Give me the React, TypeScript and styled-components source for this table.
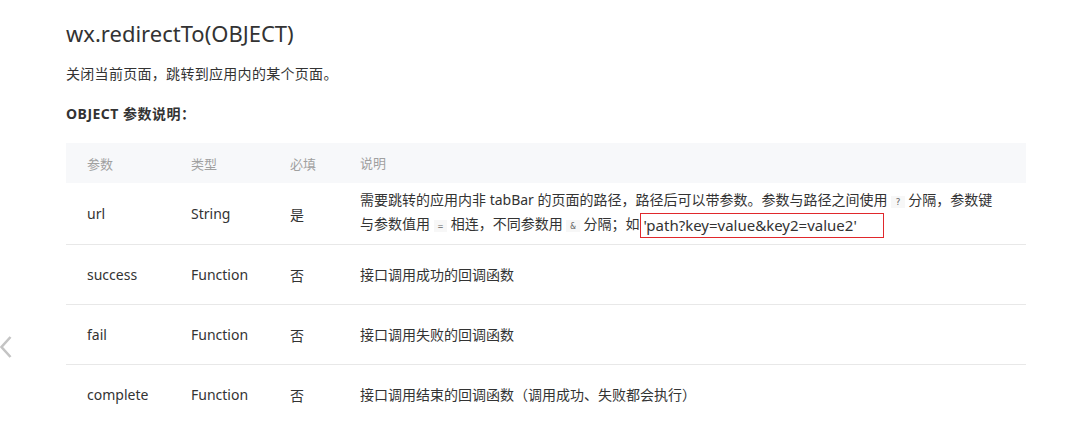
import type { ReactNode } from "react";
import styled, { createGlobalStyle } from "styled-components";

const GlobalStyle = createGlobalStyle`
  html, body {
    margin: 0;
    padding: 0;
    background: #ffffff;
  }
  body {
    font-family: "Noto Sans", "Noto Sans CJK SC", sans-serif;
    color: #333333;
  }
`;

const Page = styled.div`
  position: relative;
  width: 1080px;
  height: 423px;
  overflow: hidden;
  padding: 18px 54px 0 66px;
  box-sizing: border-box;
`;

const BackArrow = styled.div`
  position: absolute;
  left: -1px;
  top: 334px;
`;

const Title = styled.h1`
  margin: 0;
  font-size: 22px;
  font-weight: 400;
  line-height: 30px;
  color: #333333;
`;

const Desc = styled.p`
  margin: 16px 0 0;
  font-size: 14px;
  line-height: 20px;
  letter-spacing: 0.3px;
  color: #333333;
`;

const SubTitle = styled.h3`
  margin: 20px 0 0;
  font-size: 14px;
  font-weight: 700;
  line-height: 20px;
  letter-spacing: 0.5px;
  color: #333333;
`;

const Table = styled.div`
  margin-top: 19px;
  width: 960px;
`;

const HeadRow = styled.div`
  display: grid;
  grid-template-columns: 104px 99px 70px 1fr;
  align-items: center;
  height: 40px;
  padding-left: 21px;
  background: #f7f8fa;
  color: #a0a0a0;
  font-size: 13px;
`;

const BodyRow = styled.div<{ $h: number }>`
  display: grid;
  grid-template-columns: 104px 99px 70px 1fr;
  align-items: center;
  height: ${(p) => p.$h}px;
  padding-left: 21px;
  border-bottom: 1px solid #e8e8e8;
  box-sizing: border-box;
  color: #333333;
  font-size: 14px;
`;

const Cell = styled.div``;

const DescCell = styled.div`
  line-height: 22px;
  padding-right: 10px;
  white-space: nowrap;
`;

const Code = styled.code`
  font-family: "DejaVu Sans Mono", monospace;
  font-size: 9px;
  color: #666666;
  background: #f7f7f7;
  padding: 1px 4px;
`;

const Marked = styled.span`
  display: inline-block;
  margin-left: 1px;
  padding: 0 26px 0 2px;
  border: 1px solid #e0282c;
  line-height: 23px;
  font-size: 15px;
  vertical-align: middle;
`;

type Row = {
  name: string;
  type: string;
  required: string;
  desc: ReactNode;
  height: number;
};

const rows: Row[] = [
  {
    name: "url",
    type: "String",
    required: "是",
    height: 62,
    desc: (
      <>
        需要跳转的应用内非 tabBar 的页面的路径，路径后可以带参数。参数与路径之间使用 <Code>?</Code> 分隔，参数键
        <br />
        与参数值用 <Code>=</Code> 相连，不同参数用 <Code>&amp;</Code> 分隔；如
        <Marked>'path?key=value&amp;key2=value2'</Marked>
      </>
    ),
  },
  { name: "success", type: "Function", required: "否", height: 60, desc: "接口调用成功的回调函数" },
  { name: "fail", type: "Function", required: "否", height: 60, desc: "接口调用失败的回调函数" },
  {
    name: "complete",
    type: "Function",
    required: "否",
    height: 60,
    desc: "接口调用结束的回调函数（调用成功、失败都会执行）",
  },
];

function App() {
  return (
    <Page>
      <GlobalStyle />
      <BackArrow>
        <svg width="14" height="26" viewBox="0 0 14 26">
          <path d="M11.5 3 L2.5 13 L11.5 23" fill="none" stroke="#c4c4c4" strokeWidth="2.6" />
        </svg>
      </BackArrow>
      <Title>wx.redirectTo(OBJECT)</Title>
      <Desc>关闭当前页面，跳转到应用内的某个页面。</Desc>
      <SubTitle>OBJECT 参数说明：</SubTitle>
      <Table>
        <HeadRow>
          <Cell>参数</Cell>
          <Cell>类型</Cell>
          <Cell>必填</Cell>
          <DescCell>说明</DescCell>
        </HeadRow>
        {rows.map((r) => (
          <BodyRow key={r.name} $h={r.height}>
            <Cell>{r.name}</Cell>
            <Cell>{r.type}</Cell>
            <Cell>{r.required}</Cell>
            <DescCell>{r.desc}</DescCell>
          </BodyRow>
        ))}
      </Table>
    </Page>
  );
}

export default App;
